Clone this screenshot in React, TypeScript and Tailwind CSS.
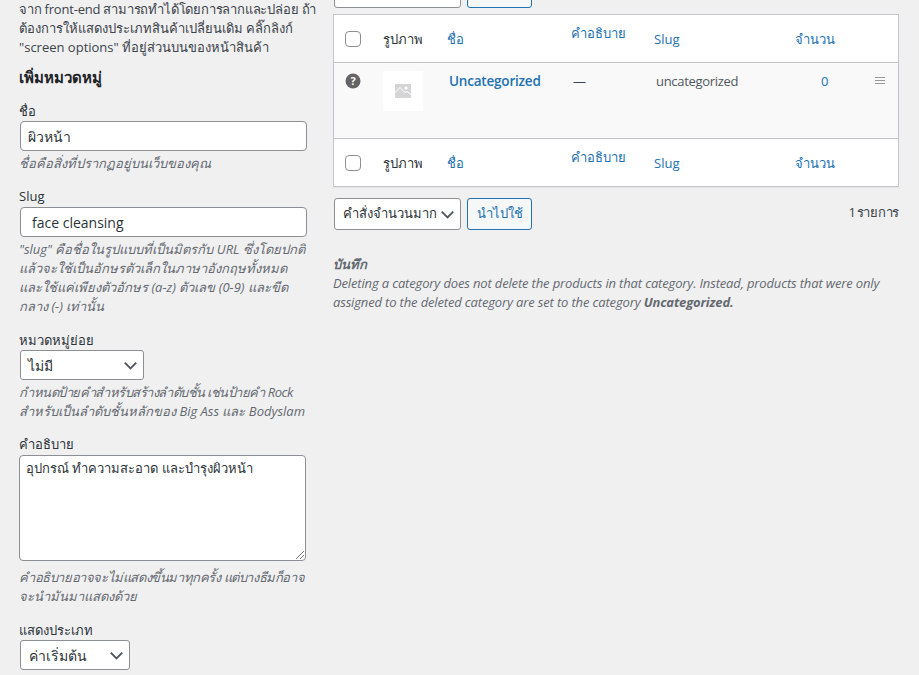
import React from "react";

const Chevron = () => (
  <svg width="19" height="19" viewBox="0 0 20 20" className="shrink-0" fill="none" stroke="#50575e" strokeWidth="2">
    <path d="M4 7l6 6 6-6" />
  </svg>
);

function Select({ label, className }: { label: string; className: string }) {
  return (
    <div className={"flex items-center justify-between bg-white border border-[#8c8f94] rounded-[3px] text-[#2c3338] " + className}>
      <span>{label}</span>
      <Chevron />
    </div>
  );
}

function Help({ children }: { children: React.ReactNode }) {
  return <div className="italic text-[#646970] text-[13px] leading-[19px] whitespace-nowrap">{children}</div>;
}

function Checkbox() {
  return <div className="w-4 h-4 bg-white border border-[#8c8f94] rounded-[4px]" />;
}

function HeadRow({ rowClass }: { rowClass: string }) {
  return (
    <tr className={"bg-white " + rowClass}>
      <td className="pl-[11px] pt-[2px]"><Checkbox /></td>
      <td className="pt-[2px] text-[#2c3338]">รูปภาพ</td>
      <td className="pt-[2px] text-[#2271b1]">ชื่อ</td>
      <td className="pb-[10px] text-[#2271b1]">คำอธิบาย</td>
      <td className="pt-[2px] text-[#2271b1]">Slug</td>
      <td className="pt-[2px] text-[#2271b1]">จำนวน</td>
      <td />
    </tr>
  );
}

export default function App() {
  return (
    <div
      className="h-[675px] overflow-hidden bg-[#f0f0f1] text-[13px] text-[#3c434a] flex"
      style={{ fontFamily: '"Open Sans", "Noto Sans", "Noto Sans CJK SC", sans-serif' }}
    >
      <div className="w-[288px] ml-[19px] shrink-0">
        <div className="leading-[19px] whitespace-nowrap">
          <div className="tracking-[-0.2px]">จาก front-end สามารถทำได้โดยการลากและปล่อย ถ้า</div>
          <div>ต้องการให้แสดงประเภทสินค้าเปลี่ยนเดิม คลิ๊กลิงก์</div>
          <div>"screen options" ที่อยู่ส่วนบนของหน้าสินค้า</div>
        </div>
        <h2 className="mt-[10px] text-[15px] leading-[20px] font-bold text-[#1d2327]">เพิ่มหมวดหมู่</h2>

        <label className="block mt-[15px] leading-[19px] text-[#2c3338]">ชื่อ</label>
        <div className="ml-[1px] h-[30px] bg-white border border-[#8c8f94] rounded-[4px] px-[7px] flex items-center text-[14px] text-[#2c3338]">ผิวหน้า</div>
        <div className="mt-[3px]"><Help>ชื่อคือสิ่งที่ปรากฏอยู่บนเว็บของคุณ</Help></div>

        <label className="block mt-[14px] leading-[19px] text-[#2c3338]">Slug</label>
        <div className="mt-[1px] ml-[1px] h-[30px] bg-white border border-[#8c8f94] rounded-[4px] px-[11px] flex items-center text-[14px] text-[#2c3338]">face cleansing</div>
        <div className="mt-[3px]">
          <Help>
            <div>"slug" คือชื่อในรูปแบบที่เป็นมิตรกับ URL ซึ่งโดยปกติ</div>
            <div>แล้วจะใช้เป็นอักษรตัวเล็กในภาษาอังกฤษทั้งหมด</div>
            <div>และใช้แค่เพียงตัวอักษร (a-z) ตัวเลข (0-9) และขีด</div>
            <div>กลาง (-) เท่านั้น</div>
          </Help>
        </div>

        <label className="block mt-[15px] leading-[19px] text-[#2c3338]">หมวดหมู่ย่อย</label>
        <Select label="ไม่มี" className="ml-[1px] w-[124px] h-[30px] pl-[7px] pr-[3px] text-[14px]" />
        <div className="mt-[3px]">
          <Help>
            <div className="tracking-[-0.5px]">กำหนดป้ายคำสำหรับสร้างลำดับชั้น เช่นป้ายคำ Rock</div>
            <div>สำหรับเป็นลำดับชั้นหลักของ Big Ass และ Bodyslam</div>
          </Help>
        </div>

        <label className="block mt-[14px] leading-[19px] text-[#2c3338]">คำอธิบาย</label>
        <div className="relative mt-[1px] h-[106px] w-[287px] bg-white border border-[#8c8f94] rounded-[4px] px-[6px] py-[2px] text-[13px] leading-[20px] text-[#2c3338]">
          อุปกรณ์ ทำความสะอาด และบำรุงผิวหน้า
          <svg width="10" height="10" viewBox="0 0 10 10" className="absolute right-0 bottom-0" stroke="#777" strokeWidth="1" fill="none">
            <path d="M1 9L9 1M5 9L9 5" />
          </svg>
        </div>
        <div className="mt-[7px]">
          <Help>
            <div className="tracking-[-0.4px]">คำอธิบายอาจจะไม่แสดงขึ้นมาทุกครั้ง แต่บางธีมก็อาจ</div>
            <div>จะนำมันมาแสดงด้วย</div>
          </Help>
        </div>

        <label className="block mt-[15px] leading-[19px] text-[#2c3338]">แสดงประเภท</label>
        <Select label="ค่าเริ่มต้น" className="ml-[1px] w-[110px] h-[30px] pl-[8px] pr-[3px] text-[14px]" />
      </div>

      <div className="w-[566px] ml-[26px] mt-[-22px] shrink-0">
        <div className="flex gap-[6px] h-[30px] ml-[1px]">
          <div className="w-[127px] bg-white border border-[#8c8f94] rounded-[3px]" />
          <div className="w-[65px] bg-[#f6f7f7] border border-[#2271b1] rounded-[3px]" />
        </div>
        <div className="mt-[6px] border border-[#c3c4c7] shadow-[0_1px_1px_rgba(0,0,0,0.04)]">
          <table className="w-full table-fixed border-collapse">
            <colgroup>
              <col className="w-[49px]" />
              <col className="w-[64px]" />
              <col className="w-[124px]" />
              <col className="w-[83px]" />
              <col className="w-[141px]" />
              <col className="w-[60px]" />
              <col />
            </colgroup>
            <thead><HeadRow rowClass="h-[47px]" /></thead>
            <tbody>
              <tr className="h-[76px] bg-[#f9f9f9] border-y border-[#c3c4c7] align-top">
                <td className="pl-[11px] pt-[10px]">
                  <svg width="16" height="16" viewBox="0 0 16 16">
                    <circle cx="8" cy="8" r="7.5" fill="#646464" />
                    <text x="8" y="12" textAnchor="middle" fontSize="11" fontWeight="700" fill="#f9f9f9">?</text>
                  </svg>
                </td>
                <td className="pt-[8px]">
                  <div className="w-10 h-10 bg-white flex items-center justify-center">
                    <svg width="16" height="14" viewBox="0 0 16 14">
                      <path fill="#d5d5d7" d="M0 0h16v14H0z" />
                      <circle cx="11" cy="4" r="1.6" fill="#fff" />
                      <path fill="#fff" d="M0 9l5-5 5 5 2-1 4 3v-1L12 7l-2 1-5-5-5 5z" />
                    </svg>
                  </div>
                </td>
                <td className="pt-[9px] pl-[2px] leading-[19px] font-semibold text-[13.5px] tracking-[-0.2px] text-[#2271b1]">Uncategorized</td>
                <td className="pt-[9px] pl-[2px] leading-[19px]">—</td>
                <td className="pt-[9px] pl-[2px] leading-[19px] tracking-[-0.3px] text-[#50575e]">uncategorized</td>
                <td className="pt-[9px] pl-[26px] leading-[19px] text-[#2271b1]">0</td>
                <td className="pt-[14px]">
                  <div className="ml-[20px] w-[10px] flex flex-col gap-[1.5px]">
                    <div className="h-[1.5px] bg-[#999]" />
                    <div className="h-[1.5px] bg-[#999]" />
                    <div className="h-[1.5px] bg-[#999]" />
                  </div>
                </td>
              </tr>
            </tbody>
            <tfoot><HeadRow rowClass="h-[48px]" /></tfoot>
          </table>
        </div>
        <div className="mt-[11px] ml-[1px] flex items-center gap-[6px]">
          <Select label="คำสั่งจำนวนมาก" className="w-[127px] h-[32px] pl-[8px] pr-[3px]" />
          <div className="w-[65px] h-[32px] bg-[#f6f7f7] border border-[#2271b1] rounded-[3px] text-[#2271b1] flex items-center justify-center">นำไปใช้</div>
          <span className="ml-auto pb-[2px] text-[#3c434a] [word-spacing:-2px] tracking-[-0.3px]">1 รายการ</span>
        </div>
        <div className="mt-[25px] italic text-[#646970] leading-[19px] tracking-[-0.15px]">
          <p className="font-bold">บันทึก</p>
          <p>Deleting a category does not delete the products in that category. Instead, products that were only assigned to the deleted category are set to the category <b>Uncategorized.</b></p>
        </div>
      </div>
    </div>
  );
}
